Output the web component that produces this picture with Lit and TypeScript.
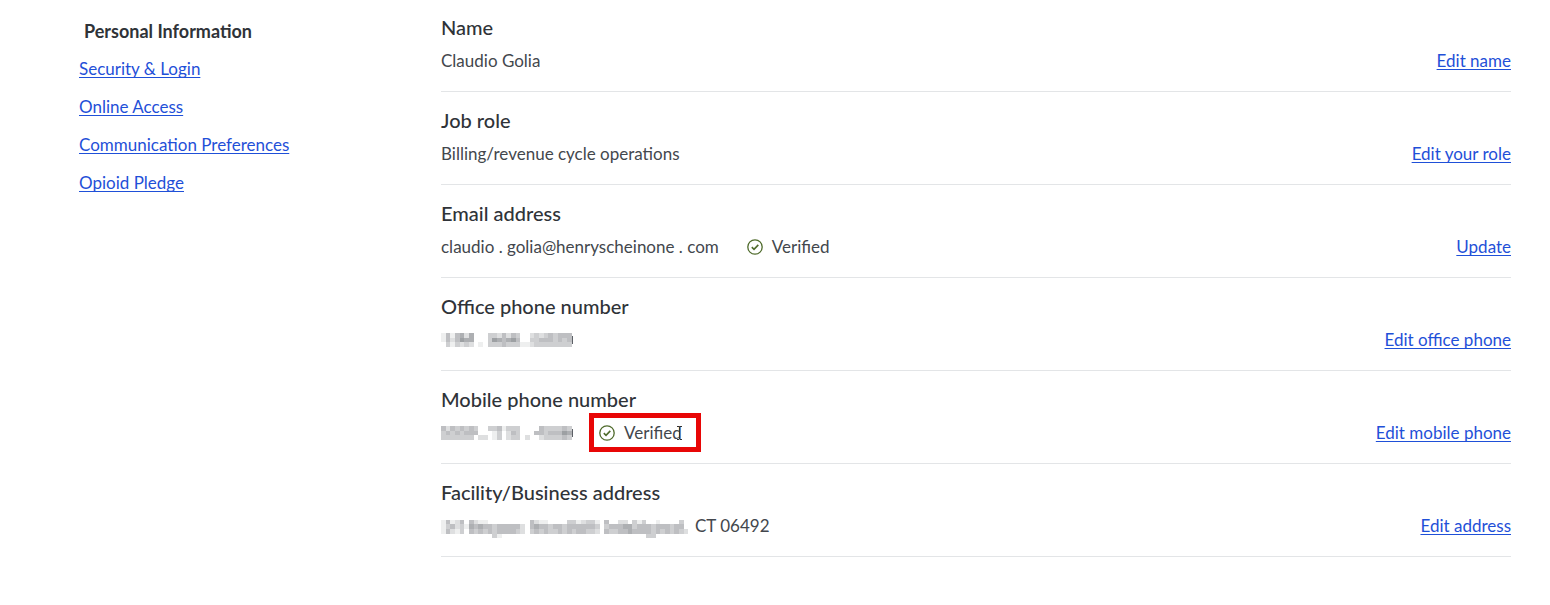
import { LitElement, html, css, svg, nothing } from "lit";
import { customElement } from "lit/decorators.js";

interface Row {
  title: string;
  value?: string;
  mosaic?: string[];
  tail?: boolean;
  verified?: boolean;
  marked?: boolean;
  action: string;
}

/* Grey levels of the redaction blocks: 0 is clear, 9 is darkest. */
const ROWS: Row[] = [
  { title: "Name", value: "Claudio Golia", action: "Edit name" },
  { title: "Job role", value: "Billing/revenue cycle operations", action: "Edit your role" },
  { title: "Email address", value: "claudio . golia@henryscheinone . com", verified: true, action: "Update" },
  {
    title: "Office phone number",
    mosaic: [
      "1414525000332424300232343444",
      "1424655000365456400334443434",
      "0313232010333433311233333333",
    ],
    tail: true,
    action: "Edit office phone",
  },
  {
    title: "Mobile phone number",
    mosaic: [
      "4243434300334133300004333343",
      "3434344400013024300044344465",
      "3333333022013023302002333343",
    ],
    tail: true,
    verified: true,
    marked: true,
    action: "Edit mobile phone",
  },
  {
    title: "Facility/Business address",
    mosaic: [
      "00000000000000000000000000000000000000000000000000000",
      "14124042110000000004211000033123310400220313001000030",
      "13423154544344444204544344344444430344455344434443440",
      "14213043434344443203434334343443320433445444434343432",
      "00000000000310000000000000000000000000000000330000000",
    ],
    value: "CT 06492",
    action: "Edit address",
  },
];

@customElement("app-root")
export class AppRoot extends LitElement {
  static styles = css`
    :host {
      display: block;
      min-height: 100vh;
      background: #fff;
      color: #43474d;
      font: 17px/24px Lato, "Open Sans", sans-serif;
      font-variant-numeric: slashed-zero;
    }
    .page {
      display: grid;
      grid-template-columns: 290px minmax(0, 1fr);
      column-gap: 72px;
      padding: 13px 39px 0 79px;
    }
    .nav {
      display: flex;
      flex-direction: column;
      align-items: flex-start;
      gap: 14px;
      padding-top: 6px;
    }
    .current {
      padding-left: 5px;
      font-size: 18px;
      font-weight: 700;
      color: #2f3338;
    }
    a {
      color: #1f50d8;
      text-decoration: underline;
      text-decoration-skip-ink: none;
      text-underline-offset: 2px;
      white-space: nowrap;
    }
    .row {
      border-bottom: 1px solid #e3e5e7;
      padding-bottom: 18px;
      margin-bottom: 14px;
    }
    h2 {
      margin: 0;
      padding-bottom: 8px;
      font-size: 20px;
      line-height: 28px;
      font-weight: 500;
      color: #2f3338;
    }
    .line {
      display: flex;
      align-items: center;
      height: 24px;
    }
    .line a {
      margin-left: auto;
    }
    .mosaic {
      display: block;
    }
    .mosaic + .value {
      margin-left: 6px;
    }
    .status {
      position: relative;
      display: flex;
      align-items: center;
      gap: 9px;
      margin-left: 28px;
    }
    .marked {
      margin-left: 26px;
    }
    .marked::after {
      content: "";
      position: absolute;
      inset: -8px -19px -7px -10px;
      border: 5px solid #e80606;
    }
    .cursor {
      position: absolute;
      right: -1px;
      top: 5px;
    }
  `;

  private mosaic(cells: string[], tail = false) {
    const size = 14 / 3;
    const at = (i: number) => Math.round(i * size);
    const width = at(cells[0].length) + 1;
    return html`<svg class="mosaic" width=${width} height=${at(cells.length)} aria-label="Hidden" role="img" shape-rendering="crispEdges">
      ${cells.map((line, y) =>
        [...line].map((c, x) =>
          c === "0"
            ? nothing
            : svg`<rect x=${at(x)} y=${at(y)} width=${at(x + 1) - at(x)} height=${at(y + 1) - at(y)} fill="#5c6066" fill-opacity=${Number(c) / 10}></rect>`,
        ),
      )}
      ${tail ? svg`<rect x=${width - 1} y="3" width="1" height="8" fill="#5c6066"></rect>` : nothing}
    </svg>`;
  }

  private status(marked = false) {
    return html`<span class="status ${marked ? "marked" : ""}">
      <svg width="16" height="16" viewBox="0 0 16 16" fill="none" stroke="#4f6b2c" stroke-width="1.3" aria-hidden="true">
        <circle cx="8" cy="8" r="7.2"></circle>
        <path d="M4.8 8.2 7 10.3 11.3 5.9" stroke-width="1.6"></path>
      </svg>
      <span>Verified</span>
      ${marked
        ? html`<svg class="cursor" width="7" height="14" viewBox="0 0 7 14" fill="none" stroke="#333" aria-hidden="true">
            <path d="M1 .5H3L3.5 1 4 .5H6M3.5 1V13M1 13.5H3L3.5 13 4 13.5H6"></path>
          </svg>`
        : nothing}
    </span>`;
  }

  render() {
    return html`<div class="page">
      <nav class="nav" aria-label="Account">
        <span class="current" aria-current="page">Personal Information</span>
        ${["Security & Login", "Online Access", "Communication Preferences", "Opioid Pledge"].map((t) => html`<a href="#">${t}</a>`)}
      </nav>
      <main>
        ${ROWS.map(
          (r) => html`<section class="row">
            <h2>${r.title}</h2>
            <div class="line">
              ${r.mosaic ? this.mosaic(r.mosaic, r.tail) : nothing}
              ${r.value ? html`<span class="value">${r.value}</span>` : nothing}
              ${r.verified ? this.status(r.marked) : nothing}
              <a href="#">${r.action}</a>
            </div>
          </section>`,
        )}
      </main>
    </div>`;
  }
}
